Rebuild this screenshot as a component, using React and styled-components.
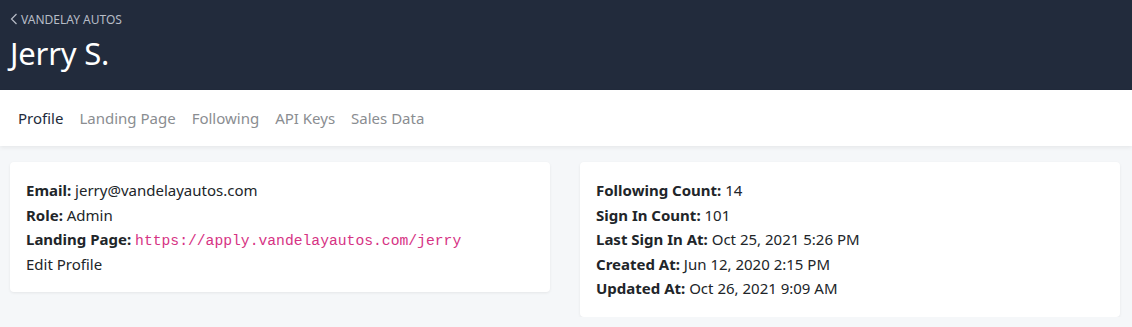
import React from "react";
import styled, { createGlobalStyle } from "styled-components";

const GlobalStyle = createGlobalStyle`
  body {
    margin: 0;
    background-color: #f5f7f9;
    font-family: "Noto Sans", "Open Sans", sans-serif;
    color: #212529;
  }
`;

const Header = styled.header`
  background-color: #222b3c;
  height: 90px;
  box-sizing: border-box;
  padding: 10px 10px 0;
`;

const BackLink = styled.a`
  display: flex;
  align-items: center;
  gap: 3px;
  color: #b7bcc6;
  font-size: 12px;
  text-transform: uppercase;
  text-decoration: none;
  height: 18px;

  svg {
    width: 8px;
    height: 12px;
  }
`;

const Title = styled.h1`
  margin: 6px 0 0;
  font-size: 31px;
  font-weight: 400;
  color: #ffffff;
  line-height: 38px;
  letter-spacing: -0.2px;
`;

const Nav = styled.nav`
  background-color: #ffffff;
  height: 56px;
  display: flex;
  align-items: center;
  gap: 16px;
  padding: 0 18px;
  box-shadow: 0 2px 4px rgba(0, 0, 0, 0.06);
`;

const NavItem = styled.a`
  font-size: 15px;
  color: ${(props) => (props.active ? "#222b3c" : "#8a8d91")};
  text-decoration: none;
  cursor: pointer;
`;

const Body = styled.main`
  display: grid;
  grid-template-columns: 540px 540px;
  gap: 30px;
  align-items: start;
  padding: 16px 12px 0 10px;
`;

const Card = styled.section`
  background-color: #ffffff;
  border-radius: 4px;
  padding: 16px;
  box-shadow: 0 1px 3px rgba(0, 0, 0, 0.07);
`;

const Row = styled.div`
  font-size: 15px;
  line-height: 24.5px;
  height: 24.5px;
  white-space: nowrap;
`;

const Label = styled.b`
  font-weight: 700;
`;

const Code = styled.code`
  font-family: "Liberation Mono", "DejaVu Sans Mono", monospace;
  font-size: 14.7px;
  line-height: 1;
  color: #d63384;
`;

const Chevron = () => (
  <svg viewBox="0 0 8 12" fill="none" stroke="#b7bcc6" strokeWidth="1.2">
    <path d="M6.5 1 L1.5 6 L6.5 11" />
  </svg>
);

const navItems = ["Profile", "Landing Page", "Following", "API Keys", "Sales Data"];

const stats = [
  ["Following Count:", "14"],
  ["Sign In Count:", "101"],
  ["Last Sign In At:", "Oct 25, 2021 5:26 PM"],
  ["Created At:", "Jun 12, 2020 2:15 PM"],
  ["Updated At:", "Oct 26, 2021 9:09 AM"],
];

export default function App() {
  return (
    <>
      <GlobalStyle />
      <Header>
        <BackLink href="#">
          <Chevron />
          Vandelay Autos
        </BackLink>
        <Title>Jerry S.</Title>
      </Header>
      <Nav>
        {navItems.map((item, i) => (
          <NavItem key={item} active={i === 0}>
            {item}
          </NavItem>
        ))}
      </Nav>
      <Body>
        <Card>
          <Row>
            <Label>Email:</Label> jerry@vandelayautos.com
          </Row>
          <Row>
            <Label>Role:</Label> Admin
          </Row>
          <Row>
            <Label>Landing Page:</Label>{" "}
            <Code>https://apply.vandelayautos.com/jerry</Code>
          </Row>
          <Row>Edit Profile</Row>
        </Card>
        <Card>
          {stats.map(([label, value]) => (
            <Row key={label}>
              <Label>{label}</Label> {value}
            </Row>
          ))}
        </Card>
      </Body>
    </>
  );
}
